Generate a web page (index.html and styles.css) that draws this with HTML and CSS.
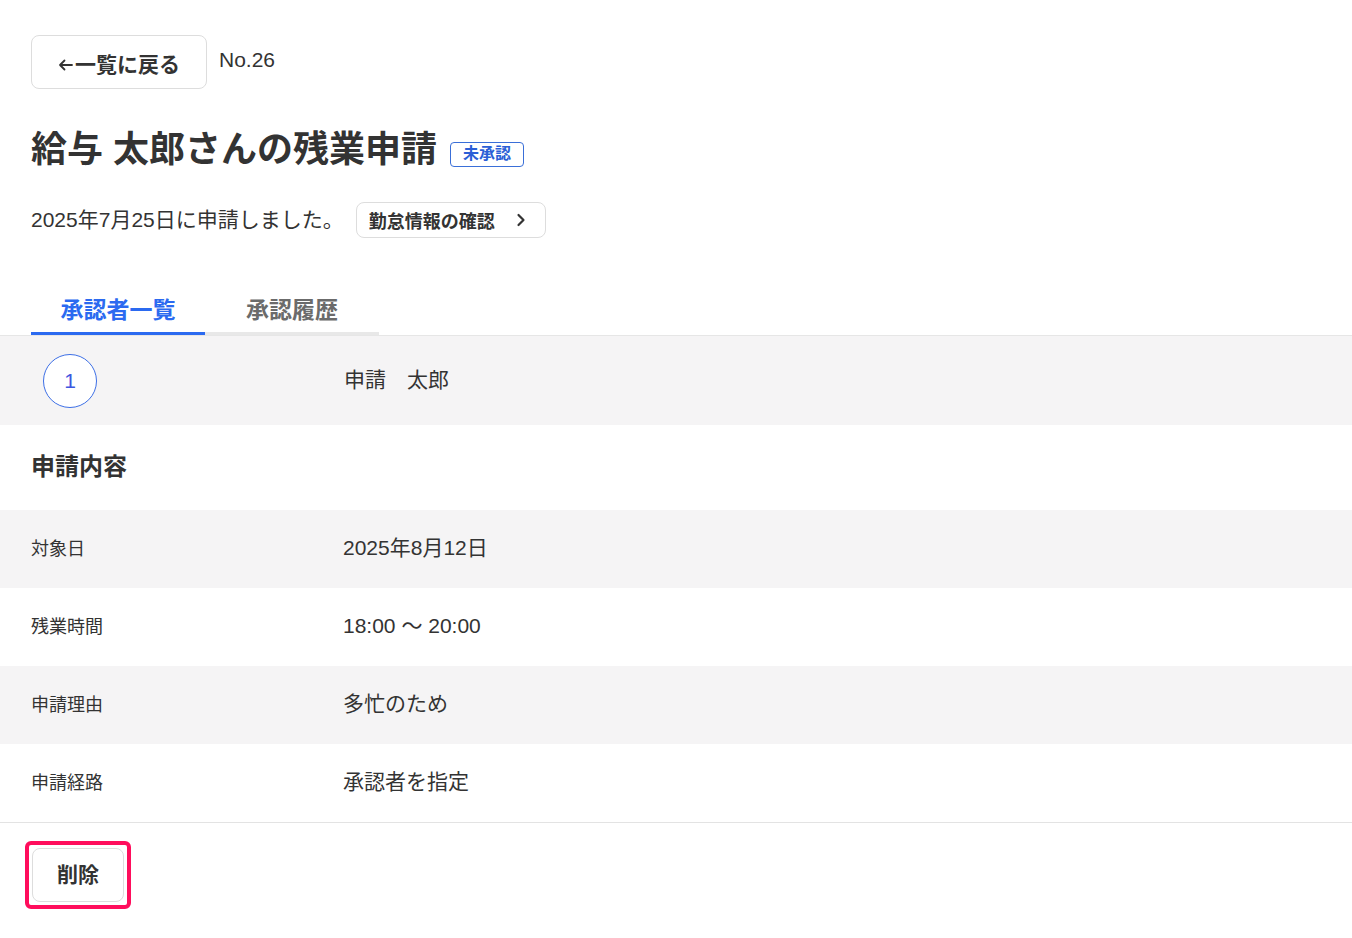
FILE: index.html
```html
<!DOCTYPE html>
<html lang="ja">

<head>
  <meta charset="utf-8">
  <title>残業申請</title>
  <link rel="stylesheet" href="styles.css">
</head>

<body>
  <main class="page">
    <div class="head">
      <a class="back-btn" href="#">
        <svg class="arrow" width="15" height="12" viewBox="0 0 15 12"><path d="M14 6 H2 M6.5 1.5 L2 6 L6.5 10.5" fill="none" stroke="#333" stroke-width="1.8" stroke-linecap="round" stroke-linejoin="round"/></svg>一覧に戻る</a>
      <span class="req-no">No.26</span>
    </div>

    <h1 class="title">給与 太郎さんの残業申請<span class="badge">未承認</span></h1>

    <div class="applied">
      <span>2025年7月25日に申請しました。</span>
      <a class="check-btn" href="#">勤怠情報の確認
        <svg width="12" height="14" viewBox="0 0 12 14"><path d="M3.5 2 L8.5 7 L3.5 12" fill="none" stroke="#333" stroke-width="2.2" stroke-linecap="round" stroke-linejoin="round"/></svg>
      </a>
    </div>

    <div class="tabs">
      <div class="tab active">承認者一覧</div>
      <div class="tab">承認履歴</div>
    </div>

    <div class="approver">
      <div class="step">1</div>
      <div class="approver-name">申請　太郎</div>
    </div>

    <h2 class="section-title">申請内容</h2>

    <dl class="details">
      <div class="row">
        <dt>対象日</dt>
        <dd>2025年8月12日</dd>
      </div>
      <div class="row">
        <dt>残業時間</dt>
        <dd>18:00 ～ 20:00</dd>
      </div>
      <div class="row">
        <dt>申請理由</dt>
        <dd>多忙のため</dd>
      </div>
      <div class="row">
        <dt>申請経路</dt>
        <dd>承認者を指定</dd>
      </div>
    </dl>

    <div class="actions">
      <div class="focus-ring">
        <button class="delete-btn">削除</button>
      </div>
    </div>
  </main>
</body>

</html>
```

FILE: styles.css
```css
html,
body {
  margin: 0;
  background: #fff;
}

body {
  font-family: "Liberation Sans", "Noto Sans CJK JP", sans-serif;
  color: #333;
}

a {
  color: inherit;
  text-decoration: none;
}

.page {
  padding-top: 35px;
}

.head {
  display: flex;
  align-items: center;
  gap: 12px;
  padding: 0 31px;
}

.back-btn {
  display: flex;
  align-items: center;
  justify-content: center;
  box-sizing: border-box;
  width: 176px;
  height: 54px;
  border: 1px solid #ddd;
  border-radius: 8px;
  font-size: 21px;
  font-weight: bold;
  padding-top: 2px;
}

.back-btn .arrow {
  margin: 4px 2px 0 0;
}

.req-no {
  font-size: 21px;
  margin-top: -4px;
}

.title {
  display: flex;
  align-items: center;
  margin: 36px 0 0;
  padding: 0 31px;
  font-size: 36px;
  line-height: 50px;
  font-weight: bold;
}

.badge {
  margin-left: 13px;
  margin-top: 8px;
  padding: 0 12px;
  height: 23px;
  line-height: 22px;
  border: 1px solid #3a6fd8;
  border-radius: 4px;
  color: #2b5fd6;
  font-size: 16px;
  font-weight: bold;
}

.applied {
  display: flex;
  align-items: center;
  gap: 12px;
  margin-top: 27px;
  padding: 0 31px;
  font-size: 21px;
}

.applied > span {
  margin-top: -4px;
}

.check-btn {
  display: flex;
  align-items: center;
  gap: 20px;
  box-sizing: border-box;
  height: 36px;
  padding: 0 18px 0 12px;
  border: 1px solid #ddd;
  border-radius: 8px;
  font-size: 18px;
  font-weight: bold;
}

.tabs {
  display: flex;
  margin-top: 56px;
  padding: 0 31px;
  border-bottom: 1px solid #e6e6e6;
}

.tab {
  width: 174px;
  padding-bottom: 6px;
  border-bottom: 3px solid #e8e8e8;
  text-align: center;
  font-size: 23px;
  line-height: 32px;
  font-weight: bold;
  color: #6b6b6b;
}

.tab.active {
  color: #2b6af0;
  border-bottom-color: #2b6af0;
}

.approver {
  display: flex;
  align-items: center;
  height: 89px;
  padding-left: 43px;
  background: #f5f4f5;
}

.step {
  display: flex;
  align-items: center;
  justify-content: center;
  box-sizing: border-box;
  width: 54px;
  height: 54px;
  border: 1px solid #3d6fe6;
  border-radius: 50%;
  background: #fff;
  color: #3d57e0;
  font-size: 21px;
}

.approver-name {
  margin-left: 247px;
  padding-bottom: 6px;
  font-size: 21px;
}

.section-title {
  margin: 0;
  padding: 0 31px;
  height: 85px;
  line-height: 84px;
  font-size: 24px;
  font-weight: bold;
}

.details {
  margin: 0;
  border-bottom: 1px solid #e3e3e3;
}

.row {
  display: flex;
  align-items: center;
  box-sizing: border-box;
  height: 78px;
  padding-left: 31px;
  padding-bottom: 4px;
}

.row:nth-child(odd) {
  background: #f5f4f5;
}

.row dt {
  width: 312px;
  font-size: 18px;
}

.row dd {
  margin: -2px 0 0;
  font-size: 21px;
}

.actions {
  padding: 18px 0 0 25px;
}

.focus-ring {
  display: inline-block;
  padding: 3px;
  border: 4px solid #ff0d5c;
  border-radius: 6px;
}

.delete-btn {
  display: block;
  width: 92px;
  height: 54px;
  padding-bottom: 5px;
  border: 1px solid #ddd;
  border-radius: 8px;
  background: #fff;
  color: #333;
  font-family: "Liberation Sans", "Noto Sans CJK JP", sans-serif;
  font-size: 21px;
  font-weight: bold;
}
```
